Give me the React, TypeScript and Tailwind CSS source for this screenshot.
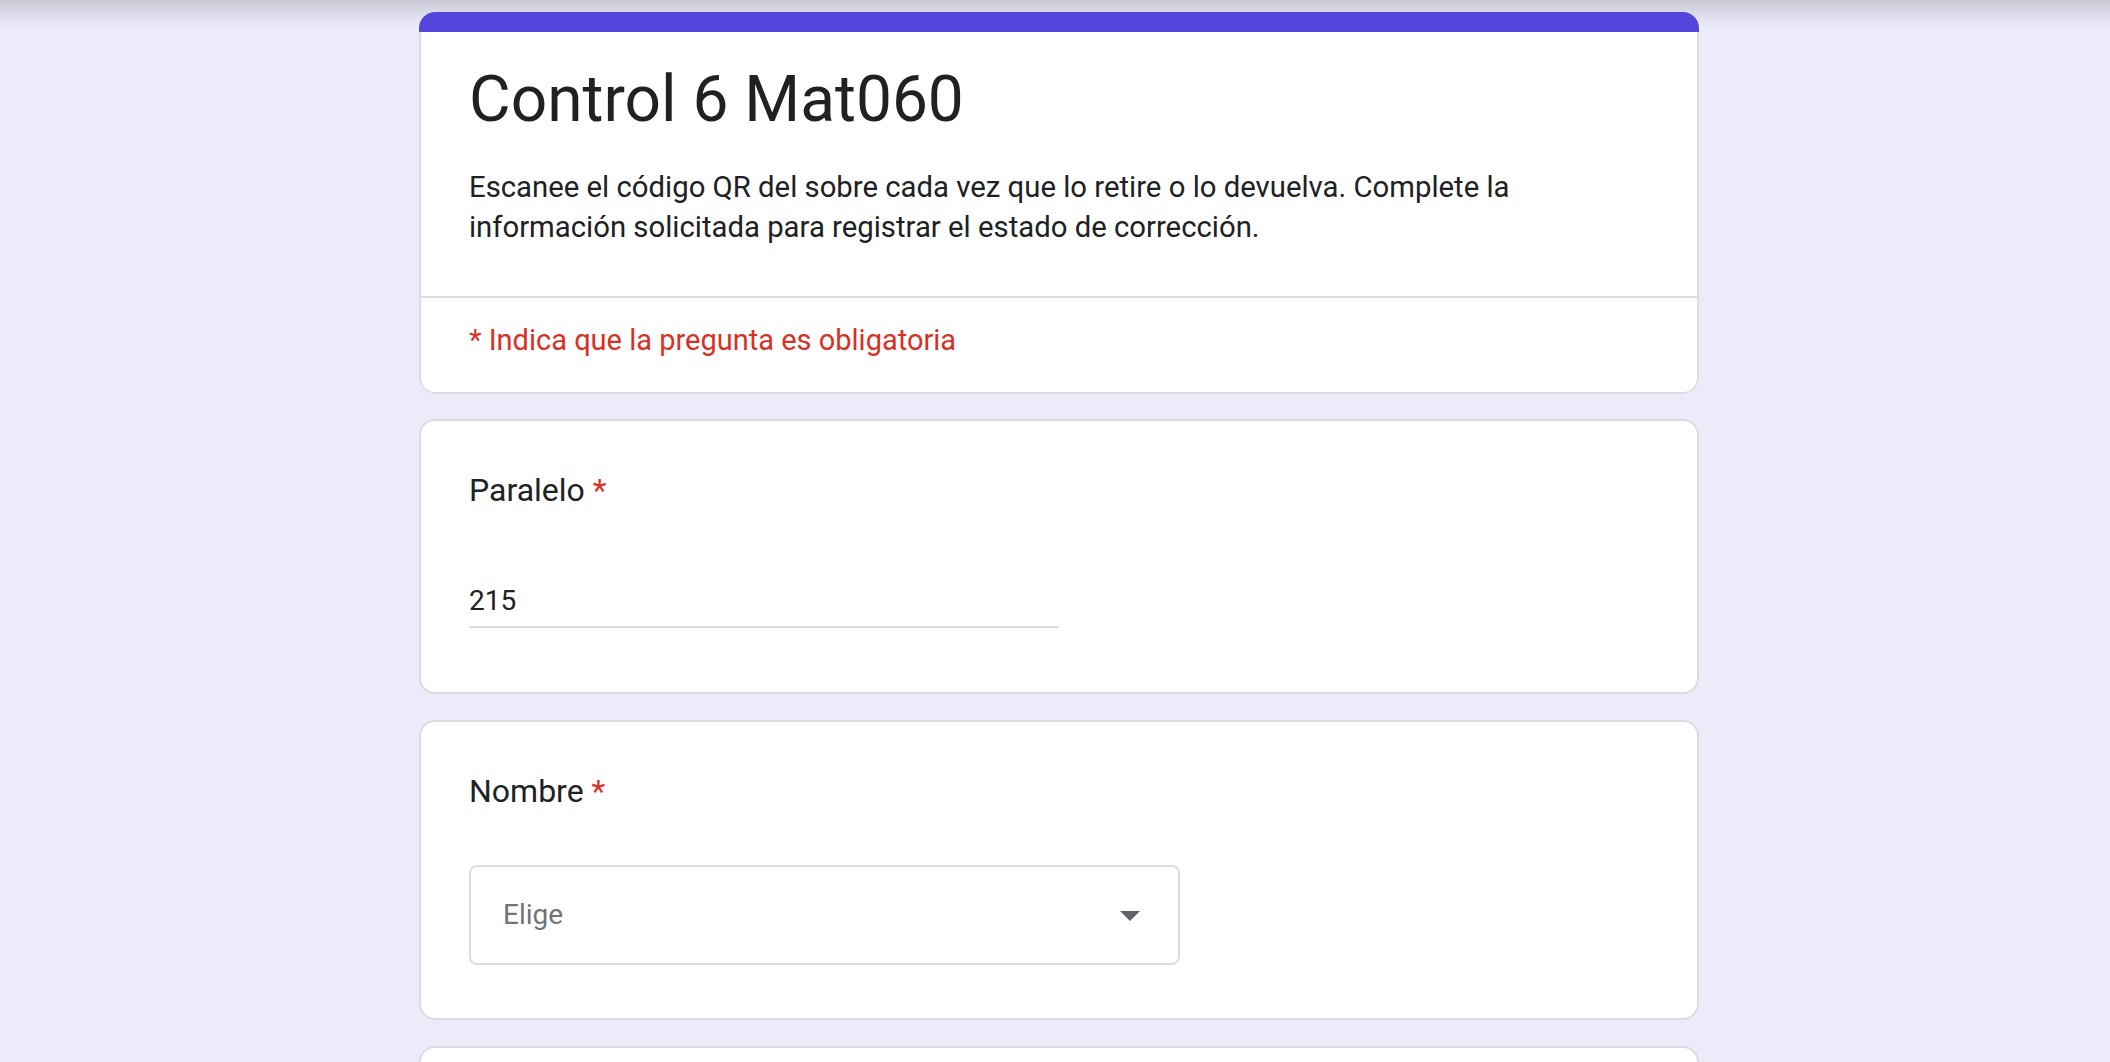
export default function App() {
  return (
    <div className="relative min-h-screen w-full bg-[#ecebfa] font-['Roboto','Liberation_Sans',sans-serif] text-[#202124]">
      {/* top header shadow */}
      <div className="pointer-events-none absolute inset-x-0 top-0 h-[26px] bg-linear-to-b from-black/15 to-transparent"></div>

      <div className="relative flex flex-col items-center pt-[12px] pl-[8px] pb-[40px]">
        {/* header card */}
        <section className="w-[1280px] overflow-hidden rounded-[16px] bg-white">
          <div className="h-[20px] bg-[#5446dd]"></div>
          <div className="rounded-b-[16px] border-x-2 border-b-2 border-[#dadce0]">
            <div className="px-[48px] pt-[28px] pb-[49px]">
              <h1 className="text-[64px] leading-[80px] font-normal">Control 6 Mat060</h1>
              <p className="mt-[27px] text-[29.3px] leading-[40px]">
                Escanee el código QR del sobre cada vez que lo retire o lo devuelva. Complete la
                información solicitada para registrar el estado de corrección.
              </p>
            </div>
            <div className="h-[2px] bg-[#dadce0]"></div>
            <p className="px-[48px] pt-[22px] pb-[32px] text-[29px] leading-[40px] text-[#d93025]">
              * Indica que la pregunta es obligatoria
            </p>
          </div>
        </section>

        {/* Paralelo */}
        <section className="mt-[25px] w-[1280px] rounded-[16px] border-2 border-[#dadce0] bg-white px-[48px] pt-[45px] pb-[64px]">
          <h2 className="text-[32px] leading-[48px]">
            Paralelo <span className="text-[#d93025]">*</span>
          </h2>
          <div className="mt-[67px] w-[590px] border-b-2 border-[#dadce0] pb-[5px]">
            <div className="text-[28px] leading-[40px]">215</div>
          </div>
        </section>

        {/* Nombre */}
        <section className="mt-[26px] w-[1280px] rounded-[16px] border-2 border-[#dadce0] bg-white px-[48px] pt-[45px] pb-[53px]">
          <h2 className="text-[32px] leading-[48px]">
            Nombre <span className="text-[#d93025]">*</span>
          </h2>
          <div className="mt-[50px] flex h-[100px] w-[711px] items-center justify-between rounded-[8px] border-2 border-[#dadce0] pl-[32px] pr-[24px]">
            <span className="text-[28px] text-[#70757a]">Elige</span>
            <svg width="48" height="48" viewBox="0 0 24 24">
              <path d="M7 10l5 5 5-5z" fill="#5f6368" />
            </svg>
          </div>
        </section>

        {/* next question (below the fold) */}
        <section className="mt-[26px] h-[280px] w-[1280px] rounded-[16px] border-2 border-[#dadce0] bg-white"></section>
      </div>
    </div>
  );
}
